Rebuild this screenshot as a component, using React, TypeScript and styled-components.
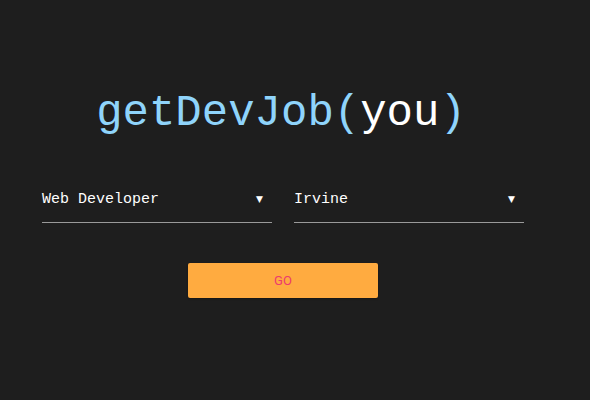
import styled, { createGlobalStyle } from 'styled-components';

const GlobalStyle = createGlobalStyle`
  html, body {
    margin: 0;
    padding: 0;
    background: #1e1e1e;
  }
  body {
    font-family: "Liberation Mono", "Courier New", monospace;
  }
`;

const Page = styled.div`
  width: 590px;
  height: 400px;
  box-sizing: border-box;
  padding: 88px 66px 0 42px;
  display: flex;
  flex-direction: column;
  align-items: center;
`;

const Title = styled.h1`
  margin: 0 4px 0 0;
  font-family: "Liberation Mono", "Courier New", monospace;
  font-weight: normal;
  font-size: 44px;
  line-height: 50px;
  color: #8fd4fb;
`;

const You = styled.span`
  color: #ffffff;
`;

const Fields = styled.div`
  margin-top: 38px;
  width: 100%;
  display: grid;
  grid-template-columns: 1fr 1fr;
  gap: 22px;
`;

const Select = styled.div`
  height: 46px;
  display: flex;
  align-items: center;
  justify-content: space-between;
  border-bottom: 1px solid #9a9a9a;
  color: #ffffff;
  font-size: 15px;
  padding-right: 9px;
`;

const Arrow = styled.span`
  font-size: 9px;
  font-family: "DejaVu Sans", sans-serif;
`;

const Button = styled.button`
  margin-top: 40px;
  width: 190px;
  height: 35px;
  background: #ffab40;
  border: none;
  border-radius: 2px;
  color: #ec3a6e;
  font-family: "Roboto", "Liberation Sans", sans-serif;
  font-size: 13px;
  cursor: pointer;
  box-shadow: 0 1px 2px rgba(0, 0, 0, 0.3);
`;

const options = ['Web Developer', 'Irvine'];

export default function App() {
  return (
    <>
      <GlobalStyle />
      <Page>
        <Title>
          getDevJob(<You>you</You>)
        </Title>
        <Fields>
          {options.map((label) => (
            <Select key={label}>
              <span>{label}</span>
              <Arrow>▼</Arrow>
            </Select>
          ))}
        </Fields>
        <Button>GO</Button>
      </Page>
    </>
  );
}
